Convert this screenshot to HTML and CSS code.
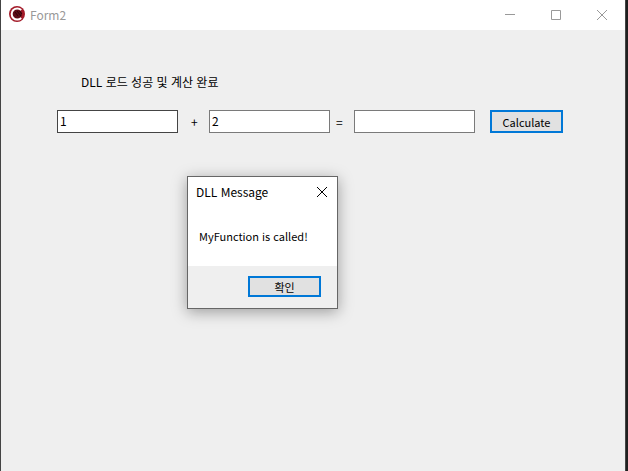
FILE: index.html
```html
<!DOCTYPE html>
<html lang="ko">
<head>
  <meta charset="UTF-8">
  <title>Form2</title>
  <link rel="stylesheet" href="styles.css">
</head>
<body>
  <div class="window">
    <header class="title-bar">
      <svg class="app-icon" viewBox="0 0 16 16" aria-hidden="true">
        <circle cx="8" cy="8" r="8" fill="#a31a28"/>
        <circle cx="8" cy="8" r="5" fill="#5c0d17"/>
        <path d="M12.2 4A5.6 5.6 0 1 0 12.2 12" fill="none" stroke="#fff" stroke-width="2"/>
        <path d="M6 6L9 10M8 5L12 10M10.500 5L13 8" fill="none" stroke="#2c0509" stroke-width="1"/>
      </svg>
      <h1 class="title">Form2</h1>
      <div class="caption-buttons">
        <button class="caption-btn" aria-label="Minimize">
          <svg width="10" height="10"><path d="M0 4.5H10"/></svg>
        </button>
        <button class="caption-btn" aria-label="Maximize">
          <svg width="10" height="10"><path d="M.5 .5H9.5V9.5H.5z"/></svg>
        </button>
        <button class="caption-btn" aria-label="Close">
          <svg width="10" height="10"><path d="M0 0L10 10M10 0L0 10"/></svg>
        </button>
      </div>
    </header>

    <main class="client">
      <p class="status">DLL 로드 성공 및 계산 완료</p>
      <form class="calc-row">
        <input class="num-box active" type="text" value="1" aria-label="First number">
        <span class="sign plus">+</span>
        <input class="num-box" type="text" value="2" aria-label="Second number">
        <span class="sign equals">=</span>
        <input class="num-box" type="text" aria-label="Result" readonly>
        <button class="push-btn calc-btn" type="button">Calculate</button>
      </form>
    </main>
  </div>

  <!-- Message box -->
  <div class="dialog" role="dialog" aria-labelledby="dialog-title">
    <div class="dialog-header">
      <h2 class="dialog-title" id="dialog-title">DLL Message</h2>
      <button class="dialog-close" aria-label="Close">
        <svg width="10" height="10"><path d="M0 0L10 10M10 0L0 10"/></svg>
      </button>
    </div>
    <p class="dialog-text">MyFunction is called!</p>
    <div class="dialog-footer">
      <button class="push-btn ok-btn">확인</button>
    </div>
  </div>
</body>
</html>
```

FILE: styles.css
```css
* {
  box-sizing: border-box;
}
body {
  margin: 0;
  padding-right: 2px;
  background-color: #1f1f1f;
  color: #000;
  font-family: "Noto Sans CJK KR", "Noto Sans", sans-serif;
  font-size: 12px;
}
button,
input {
  font: inherit;
  color: inherit;
}
h1,
h2,
p {
  margin: 0;
  font-size: 12px;
  font-weight: normal;
}
svg {
  display: block;
  overflow: visible;
}

.window {
  display: flex;
  flex-direction: column;
  min-height: 100vh;
  border: solid #444;
  border-width: 0 1px;
  background-color: #efefef;
}

/* Title bar */
.title-bar {
  display: flex;
  align-items: center;
  height: 30px;
  padding-left: 8px;
  background-color: #fff;
}
.app-icon {
  width: 16px;
  height: 16px;
  margin-top: -2px;
}
.title {
  margin-left: 5px;
  color: #999;
  line-height: 28px;
}
.caption-buttons {
  display: flex;
  height: 28px;
  margin-left: auto;
}
.caption-btn {
  display: flex;
  align-items: center;
  justify-content: center;
  width: 46px;
  padding: 0;
  border: none;
  background: none;
}
.caption-btn svg {
  stroke: #999;
  fill: none;
}

/* Form */
.client {
  flex: 1;
  padding: 40px 56px;
}
.status {
  padding-left: 24px;
  line-height: 24px;
}
.calc-row {
  display: flex;
  margin-top: 16px;
}
.num-box {
  flex: 0 1 121px;
  min-width: 0;
  height: 23px;
  padding: 0 2px 2px;
  border: 1px solid #7a7a7a;
  background-color: #fff;
  outline: none;
}
.num-box.active {
  border-color: #444;
}
.sign {
  line-height: 24px;
}
.plus {
  width: 31px;
  padding-left: 13px;
}
.equals {
  width: 24px;
  padding-left: 6px;
}
.push-btn {
  padding: 0;
  border: 2px solid #0078d7;
  background-color: #e1e1e1;
  font-size: 11px;
}
.calc-btn {
  width: 73px;
  height: 23px;
  margin-left: 15px;
  line-height: 18px;
}

/* Message box */
.dialog {
  position: absolute;
  top: 176px;
  left: 187px;
  width: 151px;
  border: 1px solid #666;
  background-color: #fff;
  box-shadow: 0 3px 14px rgba(0, 0, 0, 0.35);
}
.dialog-header {
  display: flex;
  align-items: center;
  justify-content: space-between;
  height: 29px;
  padding: 0 10px 0 8px;
}
.dialog-close {
  padding: 0;
  border: none;
  background: none;
}
.dialog-close svg {
  stroke: #000;
}
.dialog-text {
  padding: 20px 11px;
  font-size: 11px;
  line-height: 20px;
}
.dialog-footer {
  display: flex;
  justify-content: flex-end;
  padding: 10px 16px 11px;
  background-color: #efefef;
}
.ok-btn {
  width: 73px;
  height: 21px;
  line-height: 16px;
}
```
